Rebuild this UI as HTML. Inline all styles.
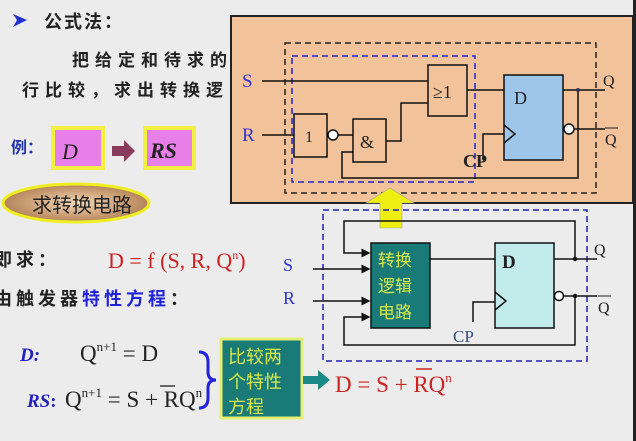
<!DOCTYPE html>
<html><head><meta charset="utf-8"><style>
html,body{margin:0;padding:0;background:#ececec;}
svg{display:block;}
text{font-family:"Liberation Serif","Noto Serif CJK SC",serif;}
.cj{font-family:"Liberation Sans","Noto Sans CJK SC",sans-serif;font-weight:bold;}
</style></head><body>
<svg width="636" height="441" viewBox="0 0 636 441" xmlns="http://www.w3.org/2000/svg">
<defs>
<radialGradient id="eg" cx="0.5" cy="0.5" r="0.6"><stop offset="0" stop-color="#f4d9b8"/><stop offset="0.6" stop-color="#c89a70"/><stop offset="1" stop-color="#a5754d"/></radialGradient>
<marker id="ar" markerWidth="6" markerHeight="6" refX="5" refY="3" orient="auto"><path d="M0,0 L6,3 L0,6 z" fill="#111"/></marker>
</defs>
<rect width="636" height="441" fill="#ececec"/>
<path d="M13,14 L27,20 L13,27 L17,20 z" fill="#2233cc"/>
<text x="44" y="28" class="cj" font-size="18" fill="#222" letter-spacing="2">公式法：</text>
<text x="72" y="66" class="cj" font-size="17" fill="#222" letter-spacing="6">把给定和待求的</text>
<text x="22" y="96" class="cj" font-size="17" fill="#222" letter-spacing="6">行比较，求出转换逻</text>
<text x="11" y="153" class="cj" font-size="16" fill="#2233aa">例：</text>
<rect x="53" y="128" width="50" height="40" fill="#e87ee8" stroke="#f2f040" stroke-width="4"/>
<text x="62" y="159" font-size="22" font-style="italic" fill="#222">D</text>
<path d="M112,146 L124,146 L124,140 L135,151 L124,162 L124,156 L112,156 z" fill="#8a3a5a"/>
<rect x="145" y="128" width="49" height="40" fill="#e87ee8" stroke="#f2f040" stroke-width="4"/>
<text x="150" y="158" font-size="22" font-style="italic" font-weight="bold" fill="#222">RS</text>
<ellipse cx="76" cy="203" rx="73" ry="19" fill="url(#eg)" stroke="#eeee20" stroke-width="3"/>
<text x="32" y="212" font-size="20" fill="#222" style="font-family:'Noto Sans CJK SC',sans-serif">求转换电路</text>
<text x="-6" y="266" class="cj" font-size="18" fill="#222" letter-spacing="4">即求：</text>
<text x="108" y="268" font-size="22" fill="#cc2222">D = f (S, R, Q<tspan font-size="12" dy="-9">n</tspan><tspan dy="9">)</tspan></text>
<text x="-6" y="305" class="cj" font-size="18" fill="#222" letter-spacing="4">由触发器<tspan fill="#2222dd">特性方程</tspan>：</text>
<text x="20" y="361" font-size="19" font-style="italic" font-weight="bold" fill="#2222bb">D:</text>
<text x="80" y="361" font-size="23" fill="#222">Q<tspan font-size="13" dy="-10">n+1</tspan><tspan dy="10"> = D</tspan></text>
<text x="27" y="407" font-size="19" font-style="italic" font-weight="bold" fill="#2222bb">RS<tspan font-style="normal">:</tspan></text>
<text x="65" y="407" font-size="23" fill="#222">Q<tspan font-size="13" dy="-10">n+1</tspan><tspan dy="10"> = S + RQ</tspan><tspan font-size="13" dy="-10">n</tspan></text>
<line x1="160" y1="386" x2="175" y2="386" stroke="#222" stroke-width="1.3"/>
<path d="M199,352 Q208,352 208,362 L208,372 Q208,380 216,380 Q208,380 208,388 L208,398 Q208,408 199,408" fill="none" stroke="#2222dd" stroke-width="3"/>
<rect x="221" y="339" width="81" height="79" fill="#1a7a78" stroke="#e4ee70" stroke-width="3"/>
<text x="228" y="363" class="cj" font-size="18" fill="#d8e84a" style="font-weight:normal">比较两</text>
<text x="228" y="388" class="cj" font-size="18" fill="#d8e84a" style="font-weight:normal">个特性</text>
<text x="228" y="413" class="cj" font-size="18" fill="#d8e84a" style="font-weight:normal">方程</text>
<path d="M303,376 L318,376 L318,370 L330,380 L318,390 L318,384 L303,384 z" fill="#1a8a88"/>
<text x="335" y="392" font-size="23" fill="#cc2222">D = S + RQ<tspan font-size="13" dy="-10">n</tspan></text>
<line x1="416" y1="369" x2="432" y2="369" stroke="#cc2222" stroke-width="1.5"/>

<rect x="231" y="16" width="402" height="187" fill="#f2c29a" stroke="#222" stroke-width="2"/>
<rect x="285" y="43" width="311" height="150" fill="none" stroke="#222" stroke-width="1.5" stroke-dasharray="6,4"/>
<rect x="292" y="56" width="183" height="126" fill="none" stroke="#2222cc" stroke-width="1.5" stroke-dasharray="6,4"/>
<text x="242" y="87" font-size="19" fill="#3333cc">S</text>
<text x="242" y="141" font-size="19" fill="#3333cc">R</text>
<g stroke="#111" stroke-width="1.5" fill="none">
<line x1="262" y1="81" x2="428" y2="81"/>
<line x1="262" y1="135" x2="294" y2="135"/>
<rect x="294" y="114" width="33" height="43"/>
<circle cx="333" cy="135" r="5" fill="#fff"/>
<line x1="338" y1="135" x2="353" y2="135"/>
<rect x="353" y="119" width="33" height="43"/>
<path d="M386,141 L401,141 L401,103 L428,103"/>
<rect x="428" y="65" width="39" height="51"/>
<line x1="467" y1="90" x2="504" y2="90"/>
<rect x="504" y="75" width="59" height="85" fill="#9ec6ea"/>
<path d="M504,125 L515,134 L504,143"/>
<path d="M483,160 L483,134 L504,134"/>
<line x1="563" y1="90" x2="605" y2="90"/>
<circle cx="569" cy="129" r="5" fill="#fff"/>
<line x1="574" y1="129" x2="605" y2="129"/>
<path d="M578,90 L578,178 L342,178 L342,152 L353,152"/>
</g>
<circle cx="578" cy="90" r="2" fill="#335"/>
<text x="305" y="142" font-size="16" fill="#222">1</text>
<text x="360" y="148" font-size="18" fill="#222">&amp;</text>
<text x="433" y="98" font-size="18" fill="#222">≥1</text>
<text x="514" y="104" font-size="18" fill="#222">D</text>
<text x="463" y="167" font-size="18" font-weight="bold" fill="#222">CP</text>
<text x="603" y="86" font-size="16" fill="#222">Q</text>
<text x="605" y="145" font-size="16" fill="#222">Q</text>
<line x1="605" y1="128" x2="618" y2="128" stroke="#222" stroke-width="1"/>

<path d="M380,228 L380,203 L366,203 L390,188 L414,203 L402,203 L402,228 z" fill="#eeee10" stroke="#aa9" stroke-width="0.6"/>

<rect x="323" y="210" width="264" height="151" fill="none" stroke="#2222aa" stroke-width="1.5" stroke-dasharray="6,4"/>
<text x="283" y="271" font-size="18" fill="#3333cc">S</text>
<text x="283" y="304" font-size="18" fill="#3333cc">R</text>
<g stroke="#111" stroke-width="1.5" fill="none">
<line x1="313" y1="269" x2="369" y2="269" marker-end="url(#ar)"/>
<line x1="313" y1="301" x2="369" y2="301" marker-end="url(#ar)"/>
<path d="M575,259 L575,221 L344,221 L344,253 L369,253" marker-end="url(#ar)"/>
<path d="M575,296 L575,345 L344,345 L344,317 L369,317" marker-end="url(#ar)"/>
<line x1="430" y1="259" x2="495" y2="259"/>
<line x1="554" y1="259" x2="597" y2="259"/>
<line x1="564" y1="296" x2="597" y2="296"/>
<path d="M473,322 L473,302 L495,302"/>
</g>
<rect x="371" y="243" width="59" height="85" fill="#1a7a78" stroke="#111" stroke-width="1.5"/>
<text x="378" y="266" class="cj" font-size="17" fill="#d8e84a" style="font-weight:normal">转换</text>
<text x="378" y="292" class="cj" font-size="17" fill="#d8e84a" style="font-weight:normal">逻辑</text>
<text x="378" y="318" class="cj" font-size="17" fill="#d8e84a" style="font-weight:normal">电路</text>
<rect x="495" y="243" width="59" height="85" fill="#c2ecec" stroke="#111" stroke-width="1.5"/>
<path d="M495,292 L506,301 L495,310" fill="none" stroke="#111" stroke-width="1.5"/>
<circle cx="559" cy="296" r="4.5" fill="#fff" stroke="#111" stroke-width="1.5"/>
<circle cx="575" cy="259" r="2.2" fill="#111"/>
<circle cx="575" cy="296" r="2.2" fill="#111"/>
<text x="502" y="268" font-size="19" font-weight="bold" fill="#222">D</text>
<text x="453" y="342" font-size="17" fill="#3a4e80">CP</text>
<text x="594" y="255" font-size="16" fill="#222">Q</text>
<text x="598" y="313" font-size="16" fill="#222">Q</text>
<line x1="598" y1="296" x2="611" y2="296" stroke="#222" stroke-width="1"/>
<rect x="633" y="0" width="3" height="441" fill="#222"/>
</svg>
</body></html>
